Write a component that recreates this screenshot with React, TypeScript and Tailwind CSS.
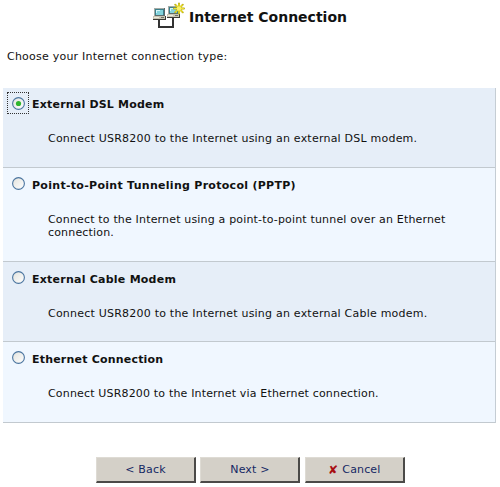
import type { ReactNode } from 'react';

type Option = {
  title: string;
  lines: string[];
  row: string;
  head: string;
  titleSpacing: string;
  textSpacing: string;
  selected?: boolean;
};

const options: Option[] = [
  {
    title: 'External DSL Modem',
    lines: ['Connect USR8200 to the Internet using an external DSL modem.'],
    row: 'h-[80px] bg-[#e6eef8]',
    head: 'h-[44px]',
    titleSpacing: 'mt-[6px] tracking-[0.2px]',
    textSpacing: 'tracking-[0.22px]',
    selected: true,
  },
  {
    title: 'Point-to-Point Tunneling Protocol (PPTP)',
    lines: ['Connect to the Internet using a point-to-point tunnel over an Ethernet', 'connection.'],
    row: 'h-[94px] bg-[#f0f7ff]',
    head: 'h-[45px]',
    titleSpacing: 'mt-[7px] tracking-[0.29px]',
    textSpacing: 'tracking-[0.17px]',
  },
  {
    title: 'External Cable Modem',
    lines: ['Connect USR8200 to the Internet using an external Cable modem.'],
    row: 'h-[80px] bg-[#e6eef8]',
    head: 'h-[45px]',
    titleSpacing: 'mt-[7px] tracking-[0.24px]',
    textSpacing: 'tracking-[0.22px]',
  },
  {
    title: 'Ethernet Connection',
    lines: ['Connect USR8200 to the Internet via Ethernet connection.'],
    row: 'h-[81px] bg-[#f0f7ff]',
    head: 'h-[45px]',
    titleSpacing: 'mt-[7px] tracking-[0.2px]',
    textSpacing: 'tracking-[0.17px]',
  },
];

function Computer() {
  return (
    <g>
      <path d="M1 0h11v8H1z" fill="#5d6a6a" />
      <path d="M1 0h10v1H2v7H1z" fill="#a5aca6" />
      <path d="M2 1h9v6H2z" fill="#3b7f8c" />
      <path d="M3 2h7v5H3z" fill="#83d3dc" />
      <path d="M3 2h4v1H4v2H3z" fill="#d2f8fb" />
      <path d="M0 8h13v3H0z" fill="#c9c6b4" />
      <path d="M0 11h13v1H0zM12 8h1v3h-1z" fill="#3b3b36" />
      <path d="M1 9h5v1H1z" fill="#eceadd" />
      <path d="M8 9h3v1H8z" fill="#6e7064" />
    </g>
  );
}

function NetworkIcon() {
  return (
    <svg width="34" height="30" viewBox="0 0 34 30" className="shrink-0" shapeRendering="crispEdges">
      <path d="M6 20h2v6h12v-8h2v10H6z" fill="#333333" />
      <g transform="translate(1 8)"><Computer /></g>
      <g transform="translate(15 6)"><Computer /></g>
      <g shapeRendering="auto" strokeLinecap="round">
        <path d="M27 3.5v10M22 8.5h10M23.2 4.7l7.6 7.6M30.8 4.7l-7.6 7.6" stroke="#b9ad12" strokeWidth="1.9" />
        <path d="M27 4v9M22.5 8.5h9M23.7 5.2l6.6 6.6M30.3 5.2l-6.6 6.6" stroke="#efe02a" strokeWidth="1.1" />
        <circle cx="27" cy="8.5" r="2.3" fill="#f8f06c" />
      </g>
    </svg>
  );
}

function Radio({ selected }: { selected?: boolean }) {
  return (
    <svg width="13" height="13" viewBox="0 0 13 13">
      <defs>
        <linearGradient id="radio-face" x1="0" y1="0" x2="1" y2="1">
          <stop offset="0" stopColor="#e2e2dc" />
          <stop offset="1" stopColor="#ffffff" />
        </linearGradient>
      </defs>
      <circle cx="6.5" cy="6.5" r="5.9" fill="url(#radio-face)" stroke="#4a749f" strokeWidth="1.1" />
      {selected && <circle cx="6.5" cy="6.5" r="2.6" fill="#2fb52d" />}
    </svg>
  );
}

function DialogButton({ children }: { children: ReactNode }) {
  return (
    <button className="flex h-[26px] w-[100px] items-center justify-center border-t border-r-2 border-b-2 border-l border-t-[#dedbd4] border-r-[#4b4a48] border-b-[#4b4a48] border-l-[#dedbd4] bg-[#d4d0c8] text-[11px] leading-[14px] tracking-[0.15px] text-[#142864]">
      {children}
    </button>
  );
}

export default function App() {
  return (
    <main className="h-[487px] w-[500px] overflow-hidden bg-white font-['DejaVu_Sans',Verdana,sans-serif] text-[11px] leading-[13px] text-[#111]">
      <header className="flex h-[50px] items-start pl-[152px]">
        <NetworkIcon />
        <h1 className="mt-[8px] ml-[3px] text-[14px] leading-[18px] font-bold whitespace-nowrap">Internet Connection</h1>
      </header>
      <p className="h-[38px] pl-[7px] tracking-[0.23px] whitespace-nowrap">Choose your Internet connection type:</p>
      <section className="ml-[3px] w-[493px] border-r border-[#c5cdd4]">
        {options.map((option) => (
          <div key={option.title} className={`${option.row} border-b border-[#c2c9cf]`}>
            <div className={`${option.head} flex items-start pt-[4px] pl-[4px]`}>
              <span
                className={`flex h-[22px] w-[22px] items-center justify-center border border-dotted ${option.selected ? 'border-[#333]' : 'border-transparent'}`}
              >
                <Radio selected={option.selected} />
              </span>
              <strong className={`ml-[3px] whitespace-nowrap ${option.titleSpacing}`}>{option.title}</strong>
            </div>
            <p className={`pl-[45px] whitespace-nowrap ${option.textSpacing}`}>
              {option.lines.map((line) => (
                <span key={line} className="block">{line}</span>
              ))}
            </p>
          </div>
        ))}
      </section>
      <footer className="mt-[34px] ml-[96px] flex gap-[4.4px]">
        <DialogButton>&lt; Back</DialogButton>
        <DialogButton>Next &gt;</DialogButton>
        <DialogButton>
          <span className="mr-[4px] text-[12px] font-bold text-[#a80d12]">✘</span>Cancel
        </DialogButton>
      </footer>
    </main>
  );
}
